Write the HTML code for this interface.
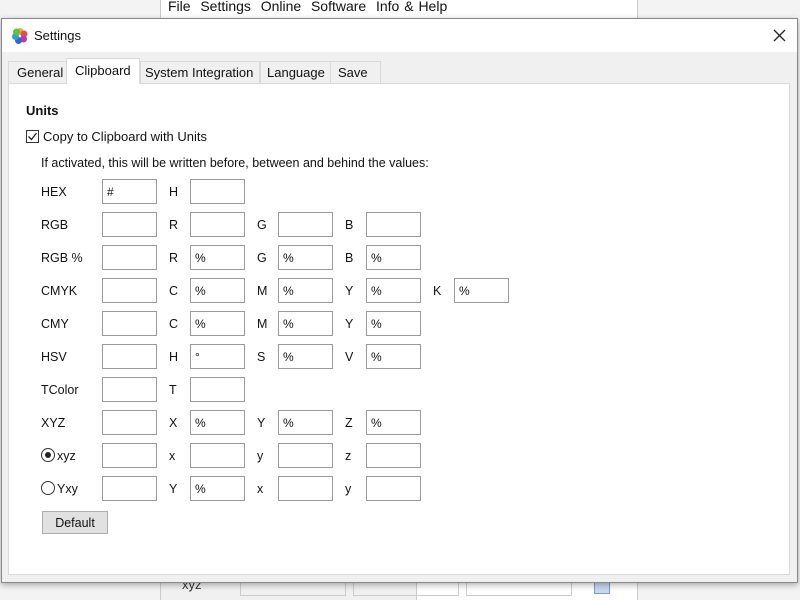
<!DOCTYPE html>
<html><head><meta charset="utf-8"><style>
*{box-sizing:border-box;margin:0;padding:0}
body{width:800px;height:600px;position:relative;overflow:hidden;background:#f3f3f3;font-family:"Liberation Sans",sans-serif;font-size:12.5px;color:#111}
.a{position:absolute}
.box{position:absolute;width:55px;height:25px;border:1px solid #9a9a9a;background:#fff;padding:5px 0 0 4px;font-size:12px}
.lb{position:absolute;font-size:12.5px}
</style></head><body>
<div class="a" style="left:160px;top:0;width:478px;height:600px;background:#fff;border-left:1px solid #ccc;border-right:1px solid #ccc"></div>
<div class="a" style="left:168px;top:-2px;font-size:14px;word-spacing:1px">File&nbsp; Settings&nbsp; Online&nbsp; Software&nbsp; Info &amp; Help</div>
<div class="a" style="left:160px;top:582px;width:257px;height:18px;background:#f0f0f0;border-left:1px solid #ccc;border-right:1px solid #ccc"></div>
<div class="a" style="left:182px;top:577px;font-size:13px;color:#333">xyz</div>
<div class="a" style="left:240px;top:582px;width:106px;height:14px;border:1px solid #ccc"></div>
<div class="a" style="left:353px;top:582px;width:106px;height:14px;border:1px solid #ccc"></div>
<div class="a" style="left:466px;top:582px;width:106px;height:14px;border:1px solid #ccc"></div>
<div class="a" style="left:594px;top:582px;width:16px;height:12px;background:#c8d8ef;border:1px solid #7a9cc8"></div>

<div class="a" style="left:1px;top:18px;width:797px;height:565px;background:#f0f0f0;border:1px solid #888;box-shadow:0 2px 6px rgba(0,0,0,.3)"></div>
<div class="a" style="left:2px;top:19px;width:795px;height:33px;background:#fff"></div>
<svg class="a" style="left:11px;top:27px" width="18" height="18" viewBox="0 0 18 18">
<circle cx="9" cy="4.5" r="3.5" fill="#e8b030"/><circle cx="13" cy="7" r="3.5" fill="#e05050"/><circle cx="12.5" cy="12" r="3.5" fill="#b040b0"/><circle cx="7.5" cy="13.5" r="3.5" fill="#4060d0"/><circle cx="4.5" cy="9.5" r="3.5" fill="#30a0d0"/><circle cx="5.5" cy="5" r="3.5" fill="#60c040"/></svg>
<div class="a" style="left:34px;top:28px;font-size:13px">Settings</div>
<svg class="a" style="left:773px;top:29px" width="13" height="13"><path d="M1 1L12 12M12 1L1 12" stroke="#222" stroke-width="1.3"/></svg>

<div class="a" style="left:8px;top:83px;width:782px;height:492px;background:#fff;border:1px solid #d9d9d9"></div>
<div class="a" style="left:8px;top:61px;width:59px;height:23px;background:#f0f0f0;border:1px solid #d9d9d9;padding:3px 0 0 8px;font-size:13px">General</div>
<div class="a" style="left:66px;top:58px;width:74px;height:26px;background:#fff;border:1px solid #d9d9d9;border-bottom:none;padding:4px 0 0 8px;font-size:13px">Clipboard</div>
<div class="a" style="left:140px;top:61px;width:120px;height:23px;background:#f0f0f0;border:1px solid #d9d9d9;padding:3px 0 0 4px;font-size:13px">System Integration</div>
<div class="a" style="left:260px;top:61px;width:71px;height:23px;background:#f0f0f0;border:1px solid #d9d9d9;padding:3px 0 0 6px;font-size:13px">Language</div>
<div class="a" style="left:330px;top:61px;width:51px;height:23px;background:#f0f0f0;border:1px solid #d9d9d9;padding:3px 0 0 7px;font-size:13px">Save</div>

<div class="a" style="left:26px;top:103px;font-weight:bold;font-size:13px">Units</div>
<div class="a" style="left:26px;top:130px;width:13px;height:13px;border:1px solid #333;background:#fff"></div>
<svg class="a" style="left:27px;top:131px" width="11" height="11"><path d="M1.5 5.5L4.5 8.5L9.5 2" stroke="#222" stroke-width="1.3" fill="none"/></svg>
<div class="a" style="left:43px;top:129px;font-size:13px">Copy to Clipboard with Units</div>
<div class="a" style="left:41px;top:156px">If activated, this will be written before, between and behind the values:</div>

<div id="g"></div>
<script>
var rows=[["HEX","#",[["H",""]]],["RGB","",[["R",""],["G",""],["B",""]]],["RGB %","",[["R","%"],["G","%"],["B","%"]]],
["CMYK","",[["C","%"],["M","%"],["Y","%"],["K","%"]]],["CMY","",[["C","%"],["M","%"],["Y","%"]]],["HSV","",[["H","°"],["S","%"],["V","%"]]],
["TColor","",[["T",""]]],["XYZ","",[["X","%"],["Y","%"],["Z","%"]]],["xyz","",[["x",""],["y",""],["z",""]]],["Yxy","",[["Y","%"],["x",""],["y",""]]]];
var h="";rows.forEach(function(r,i){var y=179+i*33;var lx=41;
if(i==8){h+='<div class="a" style="left:41px;top:'+(y+5)+'px;width:14px;height:14px;border-radius:50%;border:1px solid #333;background:#fff"></div><div class="a" style="left:45px;top:'+(y+9)+'px;width:6px;height:6px;border-radius:50%;background:#222"></div>';lx=57;}
if(i==9){h+='<div class="a" style="left:41px;top:'+(y+5)+'px;width:14px;height:14px;border-radius:50%;border:1px solid #333;background:#fff"></div>';lx=57;}
h+='<div class="lb" style="left:'+lx+'px;top:'+(y+6)+'px">'+r[0]+'</div>';
h+='<div class="box" style="left:102px;top:'+y+'px">'+r[1]+'</div>';
r[2].forEach(function(c,j){var x=190+j*88;h+='<div class="lb" style="left:'+(x-21)+'px;top:'+(y+6)+'px">'+c[0]+'</div><div class="box" style="left:'+x+'px;top:'+y+'px">'+c[1]+'</div>';});});
document.getElementById("g").innerHTML=h;
</script>
<div class="a" style="left:42px;top:511px;width:66px;height:23px;background:#e1e1e1;border:1px solid #adadad;text-align:center;padding-top:4px">Default</div>
</body></html>
